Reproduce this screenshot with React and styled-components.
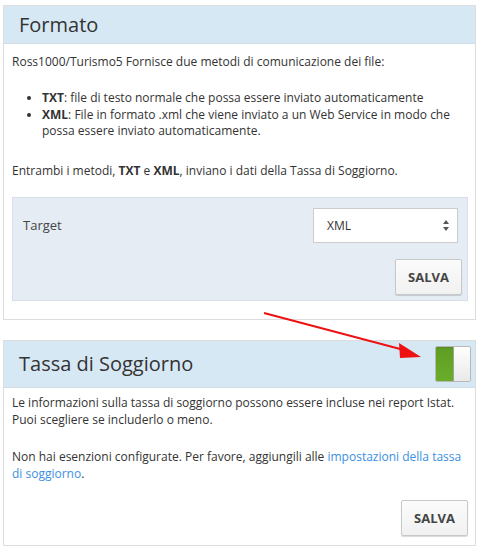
import styled, { createGlobalStyle } from 'styled-components'

const GlobalStyle = createGlobalStyle`
  body {
    margin: 0;
    background: #ffffff;
    font-family: "Open Sans", "Liberation Sans", sans-serif;
    color: #333333;
  }
`

const Page = styled.div`
  position: relative;
  display: flex;
  flex-direction: column;
  gap: 20px;
  padding: 5px 0 0 3px;
  width: 473px;
`

const Panel = styled.section`
  border: 1px solid #dddddd;
  background: #ffffff;
`

const PanelHeader = styled.div`
  display: flex;
  align-items: center;
  justify-content: space-between;
  height: ${props => props.$tall ? '46px' : '37px'};
  padding: 0 4px 0 15px;
  background: #d7e8f5;
  border-bottom: 1px solid #d0dde8;
`

const Title = styled.h2`
  margin: 0;
  font-size: 20px;
  font-weight: 400;
  color: #333333;
`

const PanelBody = styled.div`
  padding: ${props => props.$top || '9px'} 7px ${props => props.$bottom || '18px'} 8px;
  font-size: 12px;
  line-height: 17px;
  color: #333333;
`

const Paragraph = styled.p`
  margin: 0 0 ${props => props.$gap || '20px'} 0;
`

const List = styled.ul`
  margin: 0 0 22px 0;
  padding-left: 30px;
  line-height: 16.5px;
`

const Link = styled.a`
  color: #3a8fe3;
  text-decoration: none;
`

const SettingsBox = styled.div`
  display: flex;
  flex-direction: column;
  align-items: flex-end;
  gap: 16px;
  margin-top: 18px;
  padding: 10px 5px 5px 10px;
  background: #e5ecf4;
  border: 1px solid #d8dfe8;
`

const FieldRow = styled.div`
  display: flex;
  align-items: center;
  justify-content: space-between;
  align-self: stretch;
  padding-right: 4px;
`

const FieldLabel = styled.label`
  font-size: 13px;
  color: #444444;
`

const Select = styled.div`
  display: flex;
  align-items: center;
  justify-content: space-between;
  box-sizing: border-box;
  width: 145px;
  height: 35px;
  padding: 0 8px 0 13px;
  background: #ffffff;
  border: 1px solid #cccccc;
  font-size: 12px;
  color: #333333;
`

const Caret = styled.svg`
  width: 6px;
  height: 11px;
`

const Button = styled.button`
  box-sizing: border-box;
  width: 67px;
  height: 36px;
  background: linear-gradient(#fbfbfb, #f1f1f1);
  border: 1px solid #c8c8c8;
  border-radius: 2px;
  box-shadow: 0 1px 1px rgba(0, 0, 0, 0.15);
  font-family: "Open Sans", "Liberation Sans", sans-serif;
  font-size: 13px;
  font-weight: 700;
  color: #444444;
`

const Actions = styled.div`
  display: flex;
  justify-content: flex-end;
  margin-top: 18px;
`

const Toggle = styled.div`
  display: flex;
  box-sizing: border-box;
  width: 36px;
  height: 36px;
  border: 1px solid #b8b8b8;
  border-radius: 2px;
  overflow: hidden;
`

const ToggleOn = styled.span`
  flex: 1;
  background: linear-gradient(#4f8a1c 0, #5f9e24 2px, #6aad2a 100%);
  border-right: 1px solid #9aa69a;
`

const ToggleOff = styled.span`
  flex: 1;
  background: linear-gradient(#ffffff, #e9e9e9);
`

const ArrowOverlay = styled.svg`
  position: absolute;
  left: 0;
  top: 0;
  width: 483px;
  height: 400px;
  pointer-events: none;
`

export default function App() {
  return (
    <>
      <GlobalStyle />
      <Page>
        <Panel>
          <PanelHeader>
            <Title>Formato</Title>
          </PanelHeader>
          <PanelBody>
            <Paragraph>Ross1000/Turismo5 Fornisce due metodi di comunicazione dei file:</Paragraph>
            <List>
              <li><b>TXT</b>: file di testo normale che possa essere inviato automaticamente</li>
              <li><b>XML</b>: File in formato .xml che viene inviato a un Web Service in modo che possa essere inviato automaticamente.</li>
            </List>
            <Paragraph $gap="0">Entrambi i metodi, <b>TXT</b> e <b>XML</b>, inviano i dati della Tassa di Soggiorno.</Paragraph>
            <SettingsBox>
              <FieldRow>
                <FieldLabel>Target</FieldLabel>
                <Select>
                  <span>XML</span>
                  <Caret viewBox="0 0 6 11">
                    <path d="M3 0 L6 4 H0 Z M3 11 L6 7 H0 Z" fill="#555555" />
                  </Caret>
                </Select>
              </FieldRow>
              <Button>SALVA</Button>
            </SettingsBox>
          </PanelBody>
        </Panel>

        <Panel>
          <PanelHeader $tall>
            <Title>Tassa di Soggiorno</Title>
            <Toggle>
              <ToggleOn />
              <ToggleOff />
            </Toggle>
          </PanelHeader>
          <PanelBody $top="6px" $bottom="9px">
            <Paragraph>Le informazioni sulla tassa di soggiorno possono essere incluse nei report Istat. Puoi scegliere se includerlo o meno.</Paragraph>
            <Paragraph $gap="0">
              Non hai esenzioni configurate. Per favore, aggiungili alle <Link href="#">impostazioni della tassa di soggiorno</Link>.
            </Paragraph>
            <Actions>
              <Button>SALVA</Button>
            </Actions>
          </PanelBody>
        </Panel>

        <ArrowOverlay viewBox="0 0 483 400">
          <line x1="264" y1="313" x2="404" y2="350" stroke="#ee1111" strokeWidth="2" />
          <polygon points="421,357 399,343 400,358" fill="#ee1111" />
        </ArrowOverlay>
      </Page>
    </>
  )
}
